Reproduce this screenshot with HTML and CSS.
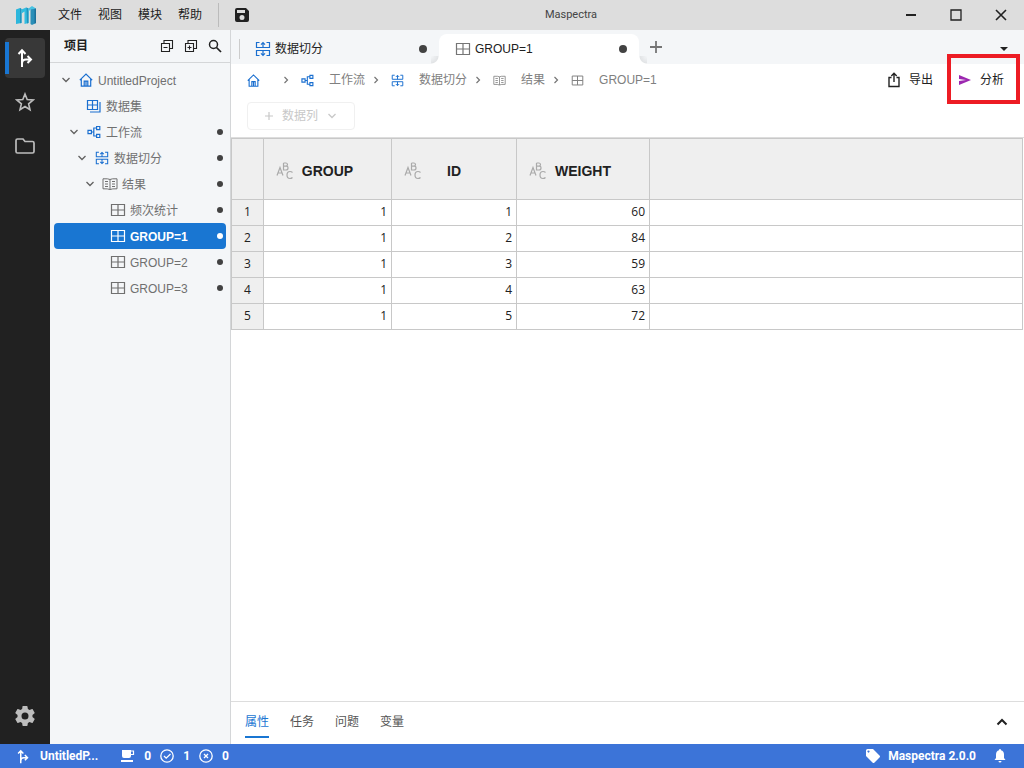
FILE: index.html
```html
<!DOCTYPE html>
<html lang="zh-CN">
<head>
<meta charset="utf-8">
<title>Maspectra</title>
<link rel="stylesheet" href="styles.css">
</head>
<body>
<svg class="sprite" aria-hidden="true">
  <symbol id="home" viewBox="0 0 14 14"><path d="M.8 7.2 7 1l6.2 6.2M2.3 6v7.2h9.4V6M5.2 13V8.2h3.6V13M7 8.2V13" fill="none" stroke="currentColor" stroke-width="1.2"/></symbol>
  <symbol id="grid" viewBox="0 0 16 14"><path d="M1.500 1.500h13v11h-13zM8 1.500v11M1.500 7h13" fill="none" stroke="currentColor" stroke-width="1.200"/></symbol>
  <symbol id="dataset" viewBox="0 0 16 14"><path d="M1.5 1.5h10v9h-10zM6.5 1.5v9M1.5 6h10M14 3v10H4" fill="none" stroke="currentColor" stroke-width="1.2"/></symbol>
  <symbol id="flow" viewBox="0 0 14 14"><path d="M1 5.300h3.400v3.400H1zM9.600 1.500H12.800v3.200H9.600zM9.600 9.300H12.800v3.200H9.600zM4.400 7h2.400M9.600 3H6.800v8h2.800" fill="none" stroke="currentColor" stroke-width="1.200"/></symbol>
  <symbol id="split" viewBox="0 0 16 16"><path d="M4.500 1.500h-3v5h13v-5h-3M4.500 14.500h-3v-5h13v5h-3M8 6.500V2M6 3.600l2-2 2 2M8 9.500V14M6 12.400l2 2 2-2" fill="none" stroke="currentColor" stroke-width="1.200"/></symbol>
  <symbol id="book" viewBox="0 0 16 14"><path d="M8 2.500Q6.500 1.500 1 1.800v10q5-.2 7 .7 2-.9 7-.7v-10q-5.500-.3-7 .7zM8 2.500v10M3 4.500h3M3 7h3M3 9.500h3M10 4.500h3M10 7h3M10 9.500h3" fill="none" stroke="currentColor"/></symbol>
  <symbol id="down" viewBox="0 0 10 10"><path d="m1.500 3 3.500 3.500L8.500 3" fill="none" stroke="currentColor" stroke-width="1.300"/></symbol>
  <symbol id="right" viewBox="0 0 10 10"><path d="m3.500 2 3 3-3 3" fill="none" stroke="currentColor" stroke-width="1.200"/></symbol>
  <symbol id="plus" viewBox="0 0 12 12"><path d="M6 0v12M0 6h12" fill="none" stroke="currentColor" stroke-width="1.800"/></symbol>
  <symbol id="branch" viewBox="0 0 16 20"><path d="M5 19V3M1.500 6 5 2.300 8.500 6M5 15.500q0-4 4-4h4.500M10.500 8l3.500 3.500-3.500 3.500" fill="none" stroke="currentColor" stroke-width="2"/></symbol>
  <symbol id="abc" viewBox="0 0 18 18"><path d="M1 13.500 4 5.500l3 8M2 11h4M7.500 1v7H10q2 0 2-2t-2-1.800H7.500M10 4.200q1.500-.2 1.500-1.600T10 1H7.500M16.500 10.500q-1-1-2.500-1-3 0-3 3.500t3 3.500q1.500 0 2.500-1" fill="none" stroke="currentColor" stroke-width="1.200"/></symbol>
</svg>
<div class="app">
  <header class="titlebar">
    <svg class="logo" viewBox="0 0 20 19" aria-hidden="true"><path d="M0 3.500 4 2l1.500 1v14L0 18z" fill="#2cb6dc"/><path d="M4 2v15.300l1.500-.3V3z" fill="#1f93be"/><path d="M5.500 3.500 10 1.500l2.500 1V17l-4 1V5.500l-3 2z" fill="#32bce0"/><path d="m10.500 1.500 2 1V17l-1.500.4z" fill="#1f93be"/><path d="M12.500 2.500 16 0l4 2.500-4 2-1.500-1-2 2z" fill="#48c3e3"/><path d="M14.500 3.500 20 2.500V17l-4 2-1.500-1z" fill="#2a8fb8"/><path d="M18.500 3 20 2.500V17l-1.500.8z" fill="#1d7099"/></svg>
    <nav class="menu"><button>文件</button><button>视图</button><button>模块</button><button>帮助</button></nav>
    <button class="save" aria-label="保存"><svg width="14" height="14" viewBox="0 0 14 14"><path fill="currentColor" fill-rule="evenodd" d="M2 0h9l3 3v9a2 2 0 0 1-2 2H2a2 2 0 0 1-2-2V2a2 2 0 0 1 2-2zm0 2v3h8V2zm5 5a2.500 2.500 0 1 0 0 5 2.500 2.500 0 0 0 0-5z"/></svg></button>
    <h1 class="title">Maspectra</h1>
    <div class="window-buttons">
      <button aria-label="最小化"><svg width="12" height="12" viewBox="0 0 12 12"><path d="M1 6h10" stroke="currentColor" stroke-width="2"/></svg></button>
      <button aria-label="最大化"><svg width="12" height="12" viewBox="0 0 12 12"><path d="M1 1h10v10H1z" fill="none" stroke="currentColor" stroke-width="1.300"/></svg></button>
      <button aria-label="关闭"><svg width="12" height="12" viewBox="0 0 12 12"><path d="m1 1 10 10M11 1 1 11" stroke="currentColor" stroke-width="1.600"/></svg></button>
    </div>
  </header>
  <div class="workspace">
    <nav class="rail">
      <button class="rail-button active" aria-label="项目"><svg width="16" height="20"><use href="#branch"/></svg></button>
      <button class="rail-button" aria-label="收藏"><svg width="20" height="20" viewBox="0 0 20 20"><path d="m10 2 2.200 5.500 6 .4-4.600 3.900 1.400 5.900-5-3.200-5 3.200 1.400-5.900L1.800 7.900l6-.4z" fill="none" stroke="currentColor" stroke-width="1.600"/></svg></button>
      <button class="rail-button" aria-label="文件夹"><svg width="20" height="18" viewBox="0 0 20 18"><path d="M2.500 2H8l2 2.500h7.500q1.500 0 1.500 1.500v8.500q0 1.500-1.500 1.500h-15Q1 16 1 14.500v-11Q1 2 2.500 2z" fill="none" stroke="currentColor" stroke-width="1.700"/></svg></button>
      <button class="rail-button settings" aria-label="设置"><svg width="24" height="24" viewBox="0 0 24 24"><path fill="currentColor" d="M12 15.500A3.500 3.500 0 0 1 8.500 12 3.500 3.500 0 0 1 12 8.500a3.500 3.500 0 0 1 3.500 3.500 3.500 3.500 0 0 1-3.500 3.500m7.430-2.530c.04-.32.07-.64.07-.97s-.03-.66-.07-1l2.110-1.630c.19-.15.24-.42.12-.64l-2-3.460c-.12-.22-.39-.31-.61-.22l-2.490 1c-.52-.39-1.060-.73-1.690-.98l-.37-2.650A.506.506 0 0 0 14 2h-4c-.25 0-.46.18-.5.420l-.37 2.650c-.63.25-1.170.59-1.690.98l-2.490-1c-.22-.09-.49 0-.61.22l-2 3.460c-.13.22-.07.49.12.64L4.570 11c-.04.34-.07.67-.07 1s.03.65.07.97l-2.110 1.660c-.19.15-.25.42-.12.64l2 3.460c.12.22.39.3.61.22l2.490-1.010c.52.4 1.060.74 1.690.99l.37 2.650c.04.24.25.42.5.42h4c.25 0 .46-.18.5-.42l.37-2.650c.63-.26 1.170-.59 1.690-.99l2.490 1.010c.22.08.49 0 .61-.22l2-3.460c.12-.22.07-.49-.12-.64z"/></svg></button>
    </nav>
    <aside class="sidebar">
      <div class="sidebar-head">
        <h2>项目</h2>
        <button aria-label="全部折叠"><svg width="14" height="14" viewBox="0 0 14 14"><path d="M1.500 4.500h8v8h-8zM4 4.500v-3h8.500v8h-3M3.500 8.500h4" fill="none" stroke="currentColor" stroke-width="1.100"/></svg></button>
        <button aria-label="全部展开"><svg width="14" height="14" viewBox="0 0 14 14"><path d="M1.500 4.500h8v8h-8zM4 4.500v-3h8.500v8h-3M3.500 8.500h4M5.500 6.500v4" fill="none" stroke="currentColor" stroke-width="1.100"/></svg></button>
        <button aria-label="搜索"><svg width="14" height="14" viewBox="0 0 14 14"><circle cx="5.500" cy="5.500" r="4" fill="none" stroke="currentColor" stroke-width="1.500"/><path d="m8.500 8.500 4.500 4.500" stroke="currentColor" stroke-width="1.700"/></svg></button>
      </div>
      <ul class="tree">
        <li class="node level-0"><svg class="arrow"><use href="#down"/></svg><svg class="icon blue"><use href="#home"/></svg><span class="label">UntitledProject</span></li>
        <li class="node level-1"><svg class="arrow"></svg><svg class="icon blue"><use href="#dataset"/></svg><span class="label">数据集</span></li>
        <li class="node level-1"><svg class="arrow"><use href="#down"/></svg><svg class="icon blue"><use href="#flow"/></svg><span class="label">工作流</span><i class="dot"></i></li>
        <li class="node level-2"><svg class="arrow"><use href="#down"/></svg><svg class="icon blue"><use href="#split"/></svg><span class="label">数据切分</span><i class="dot"></i></li>
        <li class="node level-3"><svg class="arrow"><use href="#down"/></svg><svg class="icon"><use href="#book"/></svg><span class="label">结果</span><i class="dot"></i></li>
        <li class="node level-4"><svg class="arrow"></svg><svg class="icon"><use href="#grid"/></svg><span class="label">频次统计</span><i class="dot"></i></li>
        <li class="node level-4 selected"><svg class="arrow"></svg><svg class="icon"><use href="#grid"/></svg><span class="label">GROUP=1</span><i class="dot"></i></li>
        <li class="node level-4"><svg class="arrow"></svg><svg class="icon"><use href="#grid"/></svg><span class="label">GROUP=2</span><i class="dot"></i></li>
        <li class="node level-4"><svg class="arrow"></svg><svg class="icon"><use href="#grid"/></svg><span class="label">GROUP=3</span><i class="dot"></i></li>
      </ul>
    </aside>
    <main class="main">
      <div class="tabs">
        <button class="tab"><svg class="tab-icon blue"><use href="#split"/></svg><span>数据切分</span><i class="dot"></i></button>
        <button class="tab current"><svg class="tab-icon"><use href="#grid"/></svg><span>GROUP=1</span><i class="dot"></i></button>
        <button class="add" aria-label="新标签"><svg width="12" height="12"><use href="#plus"/></svg></button>
        <button class="more" aria-label="更多标签"><svg width="8" height="4" viewBox="0 0 8 4"><path d="M0 0h8L4 4z" fill="currentColor"/></svg></button>
      </div>
      <div class="pathbar">
        <nav class="crumbs">
          <a class="crumb" href="#" aria-label="主页"><svg class="crumb-icon blue" viewBox="0 0 14 14"><use href="#home"/></svg><span></span></a><svg class="sep"><use href="#right"/></svg>
          <a class="crumb" href="#"><svg class="crumb-icon blue" viewBox="0 0 14 14"><use href="#flow"/></svg><span>工作流</span></a><svg class="sep"><use href="#right"/></svg>
          <a class="crumb" href="#"><svg class="crumb-icon blue"><use href="#split"/></svg><span>数据切分</span></a><svg class="sep"><use href="#right"/></svg>
          <a class="crumb" href="#"><svg class="crumb-icon"><use href="#book"/></svg><span>结果</span></a><svg class="sep"><use href="#right"/></svg>
          <a class="crumb" href="#"><svg class="crumb-icon"><use href="#grid"/></svg><span>GROUP=1</span></a>
        </nav>
        <button class="action"><svg width="14" height="16" viewBox="0 0 14 16"><path d="M4.500 5.500H2v9h10v-9H9.500M7 10V1.500M4.300 4 7 1.300 9.700 4" fill="none" stroke="currentColor" stroke-width="1.400"/></svg>导出</button>
        <button class="action analyze"><svg width="14" height="14" viewBox="0 0 14 14"><path d="M1 2v4l7 1-7 1v4l12-5z" fill="#9c27b0"/></svg>分析</button>
      </div>
      <div class="columnbar"><button class="column-button" disabled><svg width="8" height="8" viewBox="0 0 12 12"><use href="#plus"/></svg>数据列<svg width="10" height="10"><use href="#down"/></svg></button></div>
      <div class="sheet">
        <table>
          <colgroup><col class="c-index"><col class="c-group"><col class="c-id"><col class="c-weight"><col></colgroup>
          <thead><tr><th></th>
            <th><div class="head"><svg class="abc"><use href="#abc"/></svg><span>GROUP</span></div></th>
            <th><div class="head"><svg class="abc"><use href="#abc"/></svg><span>ID</span></div></th>
            <th><div class="head"><svg class="abc"><use href="#abc"/></svg><span>WEIGHT</span></div></th><th></th></tr></thead>
          <tbody>
            <tr><th>1</th><td>1</td><td>1</td><td>60</td><td></td></tr>
            <tr><th>2</th><td>1</td><td>2</td><td>84</td><td></td></tr>
            <tr><th>3</th><td>1</td><td>3</td><td>59</td><td></td></tr>
            <tr><th>4</th><td>1</td><td>4</td><td>63</td><td></td></tr>
            <tr><th>5</th><td>1</td><td>5</td><td>72</td><td></td></tr>
          </tbody>
        </table>
      </div>
      <div class="panel">
        <button class="panel-tab on">属性</button><button class="panel-tab">任务</button><button class="panel-tab">问题</button><button class="panel-tab">变量</button>
        <button class="expand" aria-label="展开"><svg width="12" height="8" viewBox="0 0 12 8"><path d="m1.500 6.500 4.500-4.500 4.500 4.500" fill="none" stroke="currentColor" stroke-width="2"/></svg></button>
      </div>
    </main>
  </div>
  <footer class="status">
    <svg width="12" height="15" viewBox="0 0 16 20"><use href="#branch"/></svg><span class="project">UntitledP...</span>
    <svg width="14" height="14" viewBox="0 0 14 14"><path d="M1 1h9v6q0 2-2 2H3Q1 9 1 7zM0 11h12v2H0z" fill="currentColor"/><path d="M10 2h2.500v3.500H10" fill="none" stroke="currentColor" stroke-width="1.200"/></svg><span>0</span>
    <svg width="14" height="14" viewBox="0 0 14 14"><circle cx="7" cy="7" r="6.200" fill="none" stroke="currentColor" stroke-width="1.300"/><path d="m4 7 2.200 2.200L10.500 5" fill="none" stroke="currentColor" stroke-width="1.300"/></svg><span>1</span>
    <svg width="14" height="14" viewBox="0 0 14 14"><circle cx="7" cy="7" r="6.200" fill="none" stroke="currentColor" stroke-width="1.300"/><path d="m5 5 4 4M9 5 5 9" stroke="currentColor" stroke-width="1.300"/></svg><span>0</span>
    <span class="version"><svg width="14" height="14" viewBox="0 0 14 14"><path fill="currentColor" fill-rule="evenodd" d="M1.500 0H7l6.500 6.500q1 1 0 2l-5 5q-1 1-2 0L0 7V1.500Q0 0 1.500 0zm1 1.500a1 1 0 1 0 .01 0z"/></svg>Maspectra 2.0.0</span>
    <svg width="12" height="14" viewBox="0 0 12 14"><path d="M6 0q1 0 1 1.200 3 .8 3 4.300v3.500l1.500 2H.5L2 9V5.500Q2 2 5 1.200 5 0 6 0zM4.500 12h3Q7.500 13.500 6 13.500T4.500 12z" fill="currentColor"/></svg>
  </footer>
</div>
</body>
</html>
```
FILE: styles.css
```css
* { box-sizing: border-box; }
body {
  margin: 0;
  font: 12px/16px Roboto, "Noto Sans CJK SC", sans-serif;
  color: #212121;
}
button {
  border: 0;
  padding: 0;
  background: none;
  color: inherit;
  font: inherit;
  display: flex;
  align-items: center;
}
svg { flex: none; display: block; }
.sprite { position: absolute; width: 0; height: 0; }
.app { display: flex; flex-direction: column; height: 100vh; }
.blue { color: #1a6fd0; }
.dot { width: 6px; height: 6px; border-radius: 50%; background: #424242; flex: none; margin-left: auto; }

.titlebar { display: flex; align-items: center; height: 30px; flex: none; background: #ddd; position: relative; }
.logo { width: 20px; height: 19px; margin: 0 22px 0 16px; }
.menu { display: flex; gap: 16px; padding-right: 16px; border-right: 1px solid #bbb; height: 24px; }
.save { margin-left: 16px; }
.title {
  position: absolute;
  left: 50%;
  transform: translateX(59px) translateX(-50%);
  margin: 0;
  font-size: 11px;
  font-weight: 400;
  color: #444;
}
.window-buttons { display: flex; gap: 33px; margin-left: auto; padding-right: 17px; }

.workspace { display: flex; flex: 1; min-height: 0; }
.rail { width: 50px; background: #212121; color: #bdbdbd; padding: 8px 5px; display: flex; flex-direction: column; gap: 4px; flex: none; }
.rail-button { height: 40px; justify-content: center; border-radius: 4px; }
.rail-button.active { background: linear-gradient(#1976d2, #1976d2) 0 50% / 4px 32px no-repeat #383838; color: #fff; }
.settings { margin-top: auto; }

.sidebar { width: 181px; flex: none; background: #f4f6f8; border-right: 1px solid #d4d6d8; }
.sidebar-head { display: flex; align-items: center; gap: 10px; height: 33px; padding: 0 8px 0 14px; border-bottom: 1px solid #d4d6d8; }
.sidebar-head h2 { margin: 0 auto 0 0; font-size: 12px; font-weight: 700; }
.tree { list-style: none; margin: 0; padding: 4px; color: #707070; font-family: "Liberation Sans", "Noto Sans CJK SC", sans-serif; }
.node { display: flex; align-items: center; height: 26px; padding-right: 3px; border-radius: 4px; }
.arrow { width: 10px; height: 10px; margin-right: 7px; color: #616161; }
.icon { width: 16px; height: 14px; margin-right: 4px; }
.label { padding-top: 2px; }
.level-0 { padding-left: 7px; }
.level-1 { padding-left: 15px; }
.level-2 { padding-left: 23px; }
.level-3 { padding-left: 31px; }
.level-4 { padding-left: 39px; }
.selected { background: #1976d2; color: #fff; font-weight: 700; }
.selected .dot { background: #fff; }

.main { flex: 1; min-width: 0; display: flex; flex-direction: column; background: #fff; }
.tabs { display: flex; height: 34px; padding: 4px 16px 0 8px; background: #f4f6f8; flex: none; }
.tab { width: 200px; padding: 0 12px 0 16px; gap: 4px; position: relative; font-family: "Liberation Sans", "Noto Sans CJK SC", sans-serif; }
.tab:first-child { background: linear-gradient(#ccc, #ccc) 0 50% / 1px 20px no-repeat; }
.tab .dot { width: 8px; height: 8px; }
.tab-icon { width: 16px; height: 16px; }
.current { background: #fff; border-radius: 8px 8px 0 0; }
.current .tab-icon { color: #757575; }
.current::before, .current::after { content: ""; position: absolute; bottom: 0; width: 8px; height: 8px; }
.current::before { right: 100%; background: radial-gradient(circle at 0 0, #f4f6f8 0, #e2e4e6 7px, #fff 8px); }
.current::after { left: 100%; background: radial-gradient(circle at 100% 0, #f4f6f8 0, #e2e4e6 7px, #fff 8px); }
.add { margin: 0 0 4px 11px; color: #757575; }
.more { margin-left: auto; }

.pathbar { display: flex; align-items: center; height: 32px; padding: 0 20px 0 16px; flex: none; }
.crumbs { display: flex; align-items: center; margin-right: auto; }
.crumb { display: flex; align-items: center; gap: 15px; color: #808080; text-decoration: none; font-family: "Liberation Sans", "Noto Sans CJK SC", sans-serif; }
.crumb-icon { width: 13px; height: 13px; }
.sep { width: 10px; height: 10px; margin: 0 10px 0 6px; color: #757575; }
.action { gap: 8px; }
.analyze { position: relative; margin-left: 25px; }
.analyze::after { content: ""; position: absolute; inset: -18px -16px -16px -11px; border: 4px solid #ed1c24; }
.columnbar { height: 41px; padding: 6px 16px 0; flex: none; }
.column-button { height: 28px; width: 108px; justify-content: center; gap: 9px; border: 1px solid #f0f0f0; border-radius: 4px; color: #c8c8c8; }

.sheet { flex: 1; min-height: 0; padding-right: 1px; border-top: 1px solid #ddd; }
table { width: 100%; table-layout: fixed; border-collapse: collapse; font: 12px/16px "Open Sans", sans-serif; }
th, td { border: 1px solid #c8c8c8; padding: 0 4px 2px; height: 26px; }
td { text-align: right; }
th { background: #efefef; font-weight: 400; }
thead th { height: 61px; padding-bottom: 0; }
.c-index { width: 32px; }
.c-group { width: 128px; }
.c-id { width: 125px; }
.c-weight { width: 133px; }
.head { display: flex; align-items: center; padding: 4px 26px 0 8px; font: 700 14px/16px "Liberation Sans", sans-serif; }
.head span { flex: 1; text-align: center; }
.abc { width: 18px; height: 18px; color: #aaa; }

.panel { display: flex; height: 43px; flex: none; padding: 0 16px 6px 14px; gap: 21px; border-top: 1px solid #ddd; }
.panel-tab { color: #555; padding-top: 6px; border-bottom: 2px solid transparent; }
.panel-tab.on { color: #1976d2; border-color: #1976d2; }
.expand { margin-left: auto; padding-top: 3px; }

.status { display: flex; align-items: center; height: 24px; flex: none; padding: 0 18px 0 17px; background: #3c74d8; color: #fff; font-weight: 700; gap: 9px; }
.project { margin: 0 14px 0 2px; }
.version { display: flex; align-items: center; gap: 8px; margin: 0 9px 0 auto; }
```
